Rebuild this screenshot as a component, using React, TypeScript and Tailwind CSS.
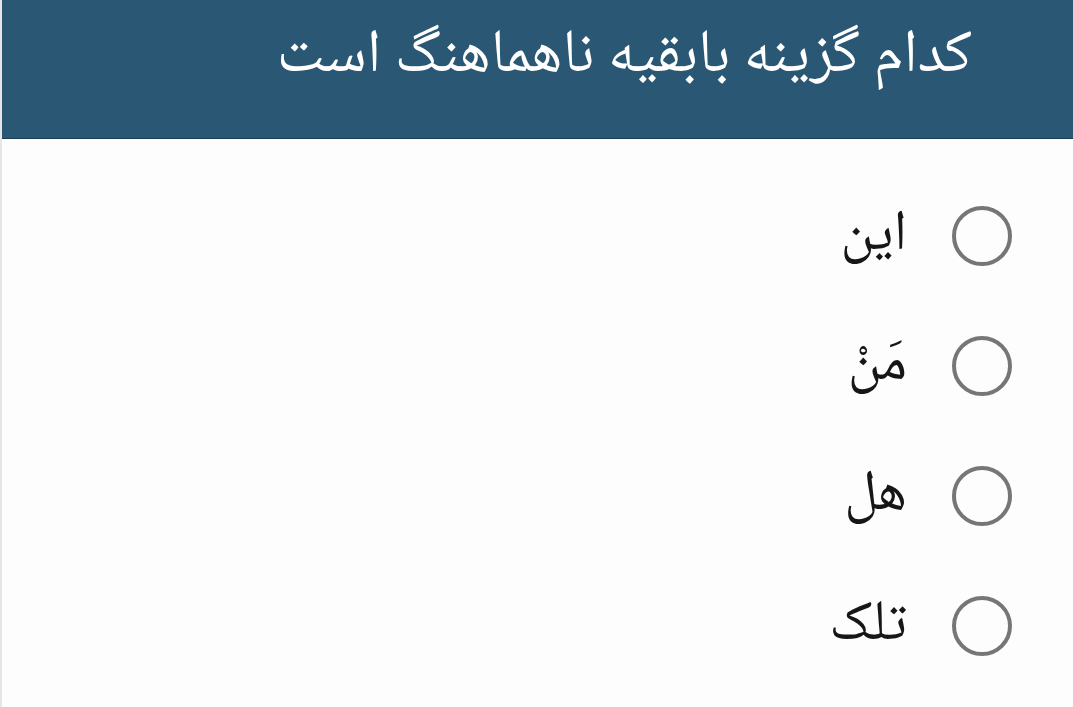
import { useState } from "react";

const options = ["این", "مَنْ", "هل", "تلک"];

export default function App() {
  const [picked, setPicked] = useState<number | null>(null);

  return (
    <div
      dir="rtl"
      className="w-[1073px] h-[707px] overflow-hidden bg-[#fdfdfd] border-l-2 border-[#e6e6e6] font-['Noto_Naskh_Arabic','DejaVu_Sans',serif]"
    >
      <div className="h-[139px] bg-[#2a5773] border-b border-[#1d3e52] pr-[101px] pt-[13px]">
        <h1 className="text-[61px] leading-[90px] text-white">کدام گزینه بابقیه ناهماهنگ است</h1>
      </div>

      <div className="flex flex-col pt-[32px] pr-[61px]">
        {options.map((o, i) => (
          <button
            key={i}
            onClick={() => setPicked(i)}
            className="h-[130px] flex items-center gap-[45px] text-right"
          >
            <span className="w-[60px] h-[60px] rounded-full border-[4px] border-[#767676] flex items-center justify-center shrink-0">
              {picked === i && <span className="w-[32px] h-[32px] rounded-full bg-[#767676]" />}
            </span>
            <span className="text-[57px] text-[#161616] leading-none">{o}</span>
          </button>
        ))}
      </div>
    </div>
  );
}
